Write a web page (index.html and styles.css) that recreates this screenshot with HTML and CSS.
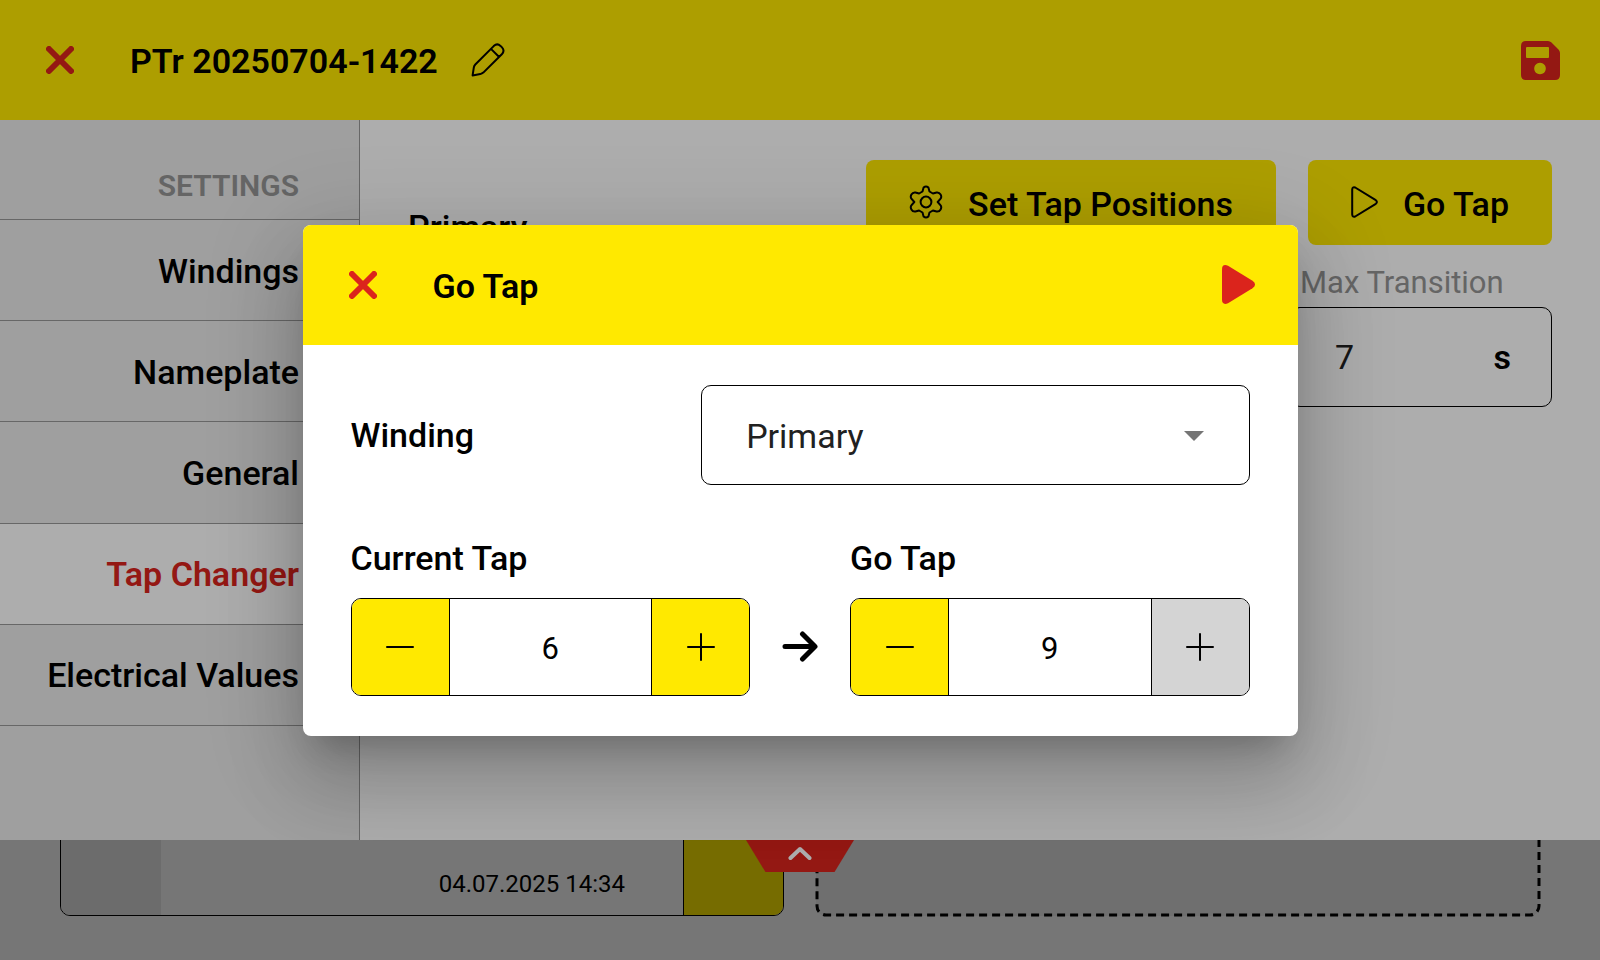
FILE: index.html
```html
<!DOCTYPE html>
<html lang="en">
<head>
<meta charset="utf-8">
<title>PTr 20250704-1422</title>
<meta name="viewport" content="width=device-width, initial-scale=1">
<link rel="stylesheet" href="styles.css">
</head>
<body>
<div class="home">
  <article class="card">
    <div class="card-side"></div>
    <div class="card-body"><time datetime="2025-07-04T14:34">04.07.2025 14:34</time></div>
    <div class="card-action"></div>
  </article>
  <div class="slot">
    <svg class="slot-outline" aria-hidden="true"><rect x="0" y="0" width="100%" height="100%" rx="9"/></svg>
  </div>
</div>
<div class="scrim"></div>

<section class="sheet">
  <header class="bar">
    <button class="icon-button" type="button" aria-label="Close">
      <svg width="28" height="28" viewBox="0 0 28 28"><path class="thick" d="M3 3l22 22M25 3l-22 22"/></svg>
    </button>
    <h1 class="bar-title">PTr 20250704-1422</h1>
    <button class="icon-button edit" type="button" aria-label="Rename">
      <svg width="34" height="34" viewBox="0 0 34 34"><path class="thin" d="M1.600 32.400L2.800 24.600Q3 22.800 4.300 21.500L22.700 3.100Q26.200-.2 29.500 2.900L31 4.400Q34.100 7.700 30.800 11.200L12.300 29.600Q11 30.700 9.300 31.100zM20.200 6.100l7.700 7.700"/></svg>
    </button>
    <button class="icon-button save" type="button" aria-label="Save">
      <svg width="39" height="39" viewBox="0 0 39 39"><path class="solid" fill-rule="evenodd" d="M5 0H27Q29 0 30.500 1.500L37.500 8.500Q39 10 39 12V34Q39 39 34 39H5Q0 39 0 34V5Q0 0 5 0zM6 6Q5 6 5 7V16Q5 17 6 17H27Q28 17 28 16V7Q28 6 27 6zM19 21.700a5.800 5.800 0 1 0 .01 0z"/></svg>
    </button>
  </header>
  <div class="columns">
    <nav class="side">
      <h2 class="side-title">SETTINGS</h2>
      <ul class="side-list">
        <li><a href="#windings">Windings</a></li>
        <li><a href="#nameplate">Nameplate</a></li>
        <li><a href="#general">General</a></li>
        <li><a class="current" href="#tap-changer" aria-current="page">Tap Changer</a></li>
        <li><a href="#electrical-values">Electrical Values</a></li>
      </ul>
    </nav>
    <main class="main">
      <h2 class="main-title">Primary</h2>
      <div class="tools">
        <div class="actions">
          <button class="action" type="button">
            <svg width="34" height="34" viewBox="0 0 34 34"><path class="thin" d="M14.600 2.600Q17 .4 19.400 2.600L20.500 6.500L23.900 8.500L27.600 7.500Q30.200 7.100 31.600 9.500Q33 12 31.400 13.900L28.700 17L31.400 20.100Q33 22 31.600 24.500Q30.200 26.900 27.600 26.500L23.900 25.500L20.500 27.500L19.400 31.400Q17 33.600 14.600 31.400L13.500 27.500L10.100 25.500L6.400 26.500Q3.800 26.900 2.400 24.500Q1 22 2.600 20.100L5.300 17L2.600 13.900Q1 12 2.400 9.500Q3.800 7.100 6.400 7.500L10.100 8.500L13.500 6.500z"/><circle class="thin" cx="17" cy="17" r="5.400"/></svg>
            Set Tap Positions
          </button>
          <button class="action" type="button">
            <svg width="27" height="32" viewBox="0 0 27 32"><path class="thin" d="M1.200 3.600Q1.400.4 4.200 1.500L24.800 14.200Q27 16 24.800 17.800L4.200 30.500Q1.400 31.600 1.200 28.400z"/></svg>
            Go Tap
          </button>
        </div>
        <div class="measure">
          <label class="measure-label" for="transition">Max Transition</label>
          <div class="measure-box">
            <input id="transition" type="text" inputmode="numeric" value="7">
            <span class="unit">s</span>
          </div>
        </div>
      </div>
    </main>
  </div>
  <button class="handle" type="button" aria-label="Expand">
    <svg width="24" height="15" viewBox="0 0 24 15"><path d="M2.500 12L12 3l9.500 9"/></svg>
  </button>
</section>

<div class="overlay">
  <form class="dialog" role="dialog" aria-modal="true" aria-labelledby="dialog-title">
    <header class="bar dialog-bar">
      <button class="icon-button" type="button" aria-label="Close dialog">
        <svg width="28" height="28" viewBox="0 0 28 28"><path class="thick" d="M3 3l22 22M25 3l-22 22"/></svg>
      </button>
      <h2 class="bar-title" id="dialog-title">Go Tap</h2>
      <button class="icon-button save" type="button" aria-label="Start">
        <svg width="33" height="39" viewBox="0 0 33 39"><path class="solid" d="M0 4.500Q0-1.500 6 .7L30.500 15.800Q33 17.500 33 19.500T30.500 23.200L6 38.300Q0 40.500 0 34.500z"/></svg>
      </button>
    </header>
    <div class="dialog-body">
      <div class="row">
        <label class="label" for="winding">Winding</label>
        <div class="select">
          <select id="winding"><option>Primary</option><option>Secondary</option></select>
        </div>
      </div>
      <div class="taps">
        <div class="tap">
          <label class="label" for="current">Current Tap</label>
          <div class="stepper">
            <button type="button" aria-label="Decrease current tap"><svg width="28" height="28" viewBox="0 0 28 28"><path d="M1 14h26"/></svg></button>
            <input id="current" type="text" inputmode="numeric" value="6">
            <button type="button" aria-label="Increase current tap"><svg width="28" height="28" viewBox="0 0 28 28"><path d="M1 14h26M14 1v26"/></svg></button>
          </div>
        </div>
        <div class="arrow">
          <svg width="36" height="31" viewBox="0 0 36 31" aria-hidden="true"><path d="M3 15.500h28M20.500 3L33 15.500L20.500 28"/></svg>
        </div>
        <div class="tap">
          <label class="label" for="target">Go Tap</label>
          <div class="stepper">
            <button type="button" aria-label="Decrease go tap"><svg width="28" height="28" viewBox="0 0 28 28"><path d="M1 14h26"/></svg></button>
            <input id="target" type="text" inputmode="numeric" value="9">
            <button type="button" aria-label="Increase go tap" disabled><svg width="28" height="28" viewBox="0 0 28 28"><path d="M1 14h26M14 1v26"/></svg></button>
          </div>
        </div>
      </div>
    </div>
  </form>
</div>
</body>
</html>
```
FILE: styles.css
```css
:root {
  --yellow: #ffe900;
  --red: #db241c;
  --grey: #eaeaea;
  --line: #999;
}

* {
  box-sizing: border-box;
}

body {
  margin: 0;
  font-family: Roboto, "Liberation Sans", sans-serif;
  font-size: 34px;
  line-height: 40px;
  color: #000;
  overflow: hidden;
}

button,
input,
select {
  margin: 0;
  padding: 0;
  border: 0;
  border-radius: 0;
  background: none;
  color: inherit;
  font: inherit;
}

h1,
h2,
ul {
  margin: 0;
  padding: 0;
}

svg {
  display: block;
  fill: none;
  stroke: #000;
  stroke-linecap: round;
  stroke-linejoin: round;
}

.thick {
  stroke: var(--red);
  stroke-width: 6;
}

.thin {
  stroke-width: 2;
}

.solid {
  fill: var(--red);
  stroke: none;
}

/* Overview behind the sheet */
.home {
  min-height: 100vh;
  display: grid;
  grid-template-columns: 1fr 1fr;
  align-content: end;
  gap: 32px;
  padding: 0 60px 44px;
}

.card {
  display: grid;
  grid-template-columns: 100px 1fr 100px;
  min-height: 240px;
  border: 1px solid #000;
  border-radius: 10px;
  overflow: hidden;
}

.card-side {
  background: var(--grey);
}

.card-body {
  display: flex;
  align-items: flex-end;
  justify-content: flex-end;
  padding: 16px 58px;
  font-size: 24px;
  line-height: 30px;
}

.card-action {
  background: var(--yellow);
  border-left: 1px solid #000;
}

.slot {
  display: grid;
  padding: 1px;
  border-radius: 10px;
  background: #efefef;
}

.slot-outline {
  width: 100%;
  height: 100%;
  overflow: visible;
  stroke-width: 3;
  stroke-linecap: butt;
  stroke-dasharray: 8 5;
}

.scrim,
.overlay {
  position: fixed;
  inset: 0;
  background: rgba(0, 0, 0, .32);
}

/* Settings sheet */
.sheet {
  position: fixed;
  inset: 0 0 120px;
  display: flex;
  flex-direction: column;
  background: #fff;
}

.bar {
  display: flex;
  align-items: center;
  min-height: 120px;
  padding: 0 40px 0 30px;
  background: var(--yellow);
}

.icon-button {
  display: grid;
  place-items: center;
  min-width: 60px;
  min-height: 60px;
}

.bar-title {
  padding: 2px 0 0 40px;
  font-size: 34px;
  font-weight: 600;
}

.edit {
  margin-left: 20px;
}

.save {
  justify-items: end;
  margin-left: auto;
}

.columns {
  flex: 1;
  display: grid;
  grid-template-columns: 360px 1fr;
}

.side {
  background: var(--grey);
  border-right: 1px solid var(--line);
}

.side-title {
  padding: 46px 60px 13px 0;
  color: #969696;
  font-size: 30px;
  font-weight: 600;
  text-align: right;
}

.side-list {
  display: grid;
  grid-auto-rows: 1fr;
  min-height: 507px;
  border-top: 1px solid var(--line);
  list-style: none;
}

.side-list li {
  display: grid;
  border-bottom: 1px solid var(--line);
}

.side-list a {
  display: flex;
  align-items: center;
  justify-content: flex-end;
  padding: 1px 60px 0 0;
  color: inherit;
  font-weight: 500;
  text-decoration: none;
}

.side-list .current {
  background: #fff;
  color: var(--red);
  font-weight: 600;
}

.main {
  display: flex;
  justify-content: space-between;
  padding: 40px 48px;
}

.main-title {
  padding-top: 47px;
  font-size: 34px;
  font-weight: 500;
}

.tools {
  display: flex;
  flex-direction: column;
  align-items: flex-end;
  gap: 18px;
}

.actions {
  display: flex;
  gap: 32px;
}

.action {
  display: flex;
  align-items: center;
  gap: 25px;
  min-height: 85px;
  padding: 2px 43px 0;
  border-radius: 8px;
  background: var(--yellow);
  font-weight: 500;
}

.action svg {
  margin-bottom: 4px;
}

.measure {
  display: flex;
  flex-direction: column;
  gap: 4px;
}

.measure-label {
  padding-left: 10px;
  color: #969696;
  font-size: 31px;
}

.measure-box {
  display: flex;
  align-items: center;
  width: 262px;
  min-height: 100px;
  padding: 0 40px 0 44px;
  border: 1px solid #000;
  border-radius: 10px;
}

.measure-box input {
  flex: 1;
  min-width: 0;
  color: #212121;
}

.unit {
  font-weight: 600;
}

.handle {
  position: absolute;
  top: 100%;
  left: 50%;
  display: grid;
  justify-items: center;
  align-content: start;
  width: 108px;
  height: 32px;
  margin-left: -54px;
  padding-top: 6px;
  background: var(--red);
  clip-path: polygon(0 0, 100% 0, 82% 100%, 18% 100%);
}

.handle svg {
  stroke: #fff;
  stroke-width: 4;
}

/* Dialog */
.overlay {
  display: grid;
  place-items: center;
}

.dialog {
  width: 90%;
  max-width: 995px;
  border-radius: 8px;
  overflow: hidden;
  background: #fff;
  box-shadow:
    0 22px 30px -14px rgba(0, 0, 0, .2),
    0 48px 76px 6px rgba(0, 0, 0, .14),
    0 18px 92px 16px rgba(0, 0, 0, .12);
}

.dialog-bar {
  padding-right: 43px;
}

.dialog-body {
  display: grid;
  gap: 53px;
  padding: 40px 48px;
}

.row {
  display: flex;
  align-items: center;
  justify-content: space-between;
}

.label {
  font-weight: 500;
}

.select {
  display: grid;
  align-items: center;
  width: 61%;
}

.select select {
  grid-area: 1 / 1;
  width: 100%;
  min-height: 100px;
  padding: 2px 44px 0;
  border: 1px solid #000;
  border-radius: 10px;
  color: #212121;
  appearance: none;
}

.select::after {
  grid-area: 1 / 1;
  justify-self: end;
  margin: 2px 46px 0;
  border: 10px solid transparent;
  border-top-color: #757575;
  border-bottom: 0;
  content: "";
  pointer-events: none;
}

.taps {
  display: grid;
  grid-template-columns: 1fr 100px 1fr;
}

.tap {
  display: grid;
  gap: 20px;
}

.stepper {
  display: grid;
  grid-template-columns: 97px 1fr 97px;
  min-height: 98px;
  border: 1px solid #000;
  border-radius: 10px;
  overflow: hidden;
}

.stepper button {
  display: grid;
  place-items: center;
  background: var(--yellow);
}

.stepper button:disabled {
  background: #d4d4d4;
}

.stepper svg {
  stroke-width: 2;
}

.stepper input {
  min-width: 0;
  padding-top: 4px;
  border: solid #000;
  border-width: 0 1px;
  font-size: 31px;
  text-align: center;
}

.arrow {
  display: grid;
  place-items: center;
  align-self: end;
  min-height: 98px;
}

.arrow svg {
  stroke-width: 5;
}
```
